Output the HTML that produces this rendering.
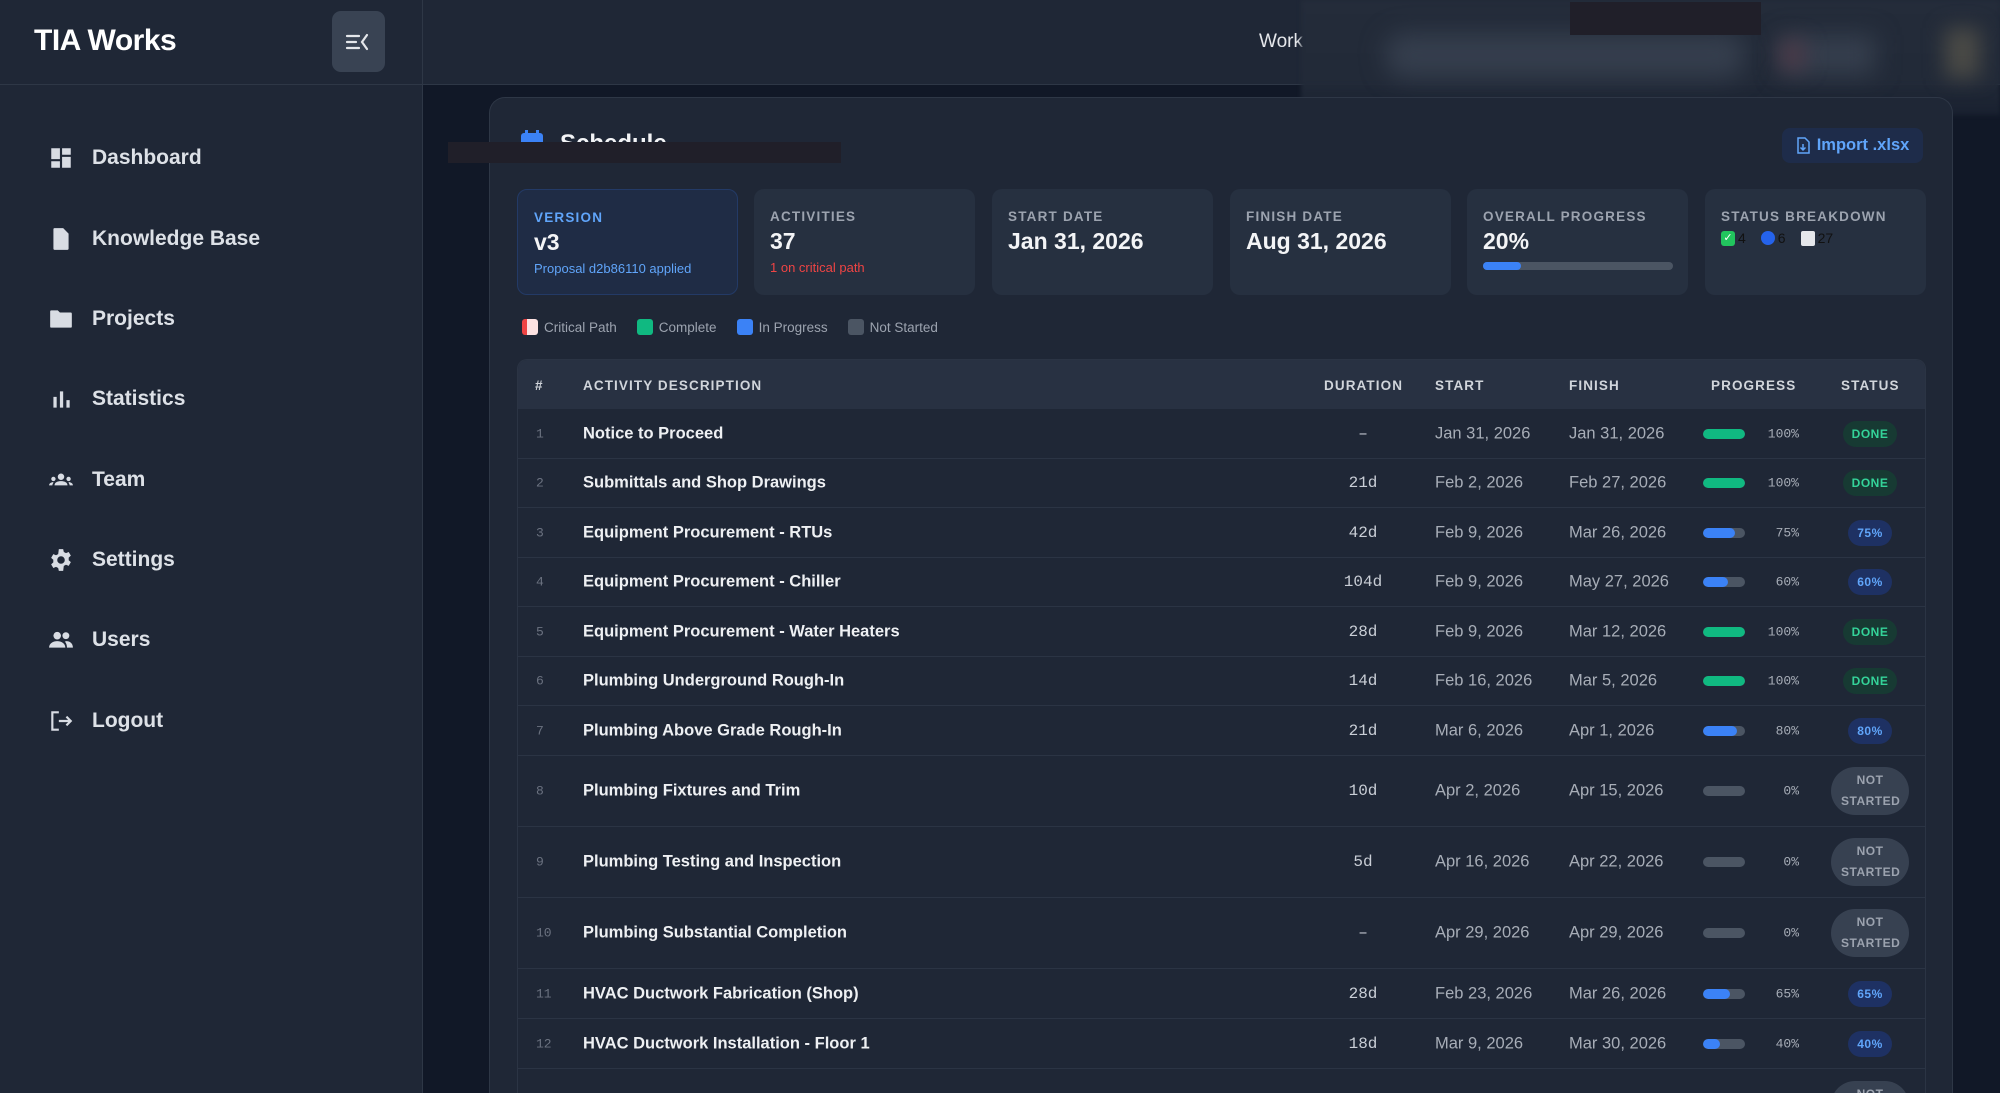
<!DOCTYPE html>
<html style="width:2000px;height:1093px;overflow:hidden"><head><meta charset="utf-8">
<style>
*{box-sizing:border-box;margin:0;padding:0}
body{width:2000px;height:1093px;overflow:hidden;background:#111827;font-family:"Liberation Sans",sans-serif;position:relative;color:#e5e7eb}
.abs{position:absolute}
#side{left:0;top:0;width:423px;height:1093px;background:#1f2736;border-right:1px solid #2e3746}
#top{left:423px;top:0;width:1577px;height:85px;background:#1f2736;border-bottom:1px solid #2e3746}
.nav{position:absolute;left:48px;height:30px;display:flex;align-items:center;font-size:21px;color:#dde1e7;font-weight:700}
.nav svg{width:26px;height:26px;margin-right:18px;fill:#d8dce3}
#card{left:489px;top:97px;width:1464px;height:996px;background:#1f2736;border:1px solid #2e3746;border-bottom:none;border-radius:16px 16px 0 0}
.stat{position:absolute;top:189px;width:221px;height:106px;background:#263040;border-radius:10px;padding:0 16px}
.stat .l{position:absolute;top:20px;left:16px;font-size:13.5px;letter-spacing:1.2px;color:#9ca3af;font-weight:700}
.stat .v{position:absolute;top:39px;left:16px;font-size:23px;font-weight:700;color:#f3f4f6}
.stat .s{position:absolute;top:71px;left:16px;font-size:13px}
#tbl{left:517px;top:359px;width:1409px;height:734px;background:#1d2534;border:1px solid #2b3444;border-bottom:none;border-radius:10px 10px 0 0;overflow:hidden}
.th{position:absolute;top:0;left:0;right:0;height:49px;background:#283142}
.th div{position:absolute;top:18px;font-size:13.5px;font-weight:700;letter-spacing:1.1px;color:#d1d5db}
.row{position:absolute;left:0;right:0;border-bottom:1px solid #2b3444;background:#1f2736}
.row div{position:absolute;top:50%;transform:translateY(-50%)}
.n{left:18px;font-family:"Liberation Mono",monospace;font-size:13px;color:#6b7280}
.d{left:65px;font-size:16.5px;font-weight:700;color:#eef0f3}
.du{left:820px;width:50px;text-align:center;font-family:"Liberation Mono",monospace;font-size:16px;color:#c9ced6}
.st{left:917px;font-size:16.5px;color:#a7adb7}
.fi{left:1051px;font-size:16.5px;color:#a7adb7}
.bar{left:1185px;width:42px;height:10px;border-radius:5px;background:#4b5563;overflow:hidden}
.bar i{display:block;height:100%;border-radius:5px}
.pc{left:1236px;width:45px;text-align:right;font-family:"Liberation Mono",monospace;font-size:13px;color:#a7adb7}
.bd{left:1312px;width:80px;text-align:center}
.bd span{display:inline-block;font-size:12px;font-weight:700;letter-spacing:.5px;border-radius:14px;padding:6px 9px}
.done{background:#173a33;color:#34d399}
.prog{background:#1e3163;color:#60a5fa}
.ns{background:#374151;color:#9ca3af;line-height:21px;padding:3px 10px!important;border-radius:24px!important;width:78px}
</style></head><body>
<div id="side" class="abs">
 <div class="abs" style="left:34px;top:24px;font-size:30px;font-weight:700;color:#fff;letter-spacing:-.5px">TIA Works</div>
 <div class="abs" style="left:332px;top:11px;width:53px;height:61px;background:#394353;border-radius:9px">
  <svg width="53" height="61" viewBox="0 0 53 61"><path d="M15 25h12M15 31h9M15 37h12M35 24l-5 7 5 7" stroke="#e5e7eb" stroke-width="2.2" fill="none" stroke-linecap="round"/></svg>
 </div>
 <div style="position:absolute;left:0;top:84px;width:423px;border-top:1px solid #2e3746"></div>
 <div class="nav" style="top:143px"><svg viewBox="0 0 24 24"><path d="M3 3h8v10H3zM13 3h8v6h-8zM13 11h8v10h-8zM3 15h8v6H3z"/></svg>Dashboard</div>
 <div class="nav" style="top:224px"><svg viewBox="0 0 24 24"><path d="M6 2h8l5 5v14a1 1 0 0 1-1 1H6a1 1 0 0 1-1-1V3a1 1 0 0 1 1-1zm3 11h7v1.5H9zm0 3h7v1.5H9z"/></svg>Knowledge Base</div>
 <div class="nav" style="top:304px"><svg viewBox="0 0 24 24"><path d="M2 5a1 1 0 0 1 1-1h6l2 2h10a1 1 0 0 1 1 1v12a1 1 0 0 1-1 1H3a1 1 0 0 1-1-1z"/></svg>Projects</div>
 <div class="nav" style="top:384px"><svg viewBox="0 0 24 24"><path d="M5 10h3v10H5zM11 5h3v15h-3zM17 13h3v7h-3z"/></svg>Statistics</div>
 <div class="nav" style="top:465px"><svg viewBox="0 0 24 24"><circle cx="12" cy="9" r="3"/><path d="M6 17c0-3 3-4 6-4s6 1 6 4z"/><circle cx="5" cy="11" r="2"/><circle cx="19" cy="11" r="2"/><path d="M1 17c0-2 2-3 4-3 0 1-1 2-1 3zM23 17c0-2-2-3-4-3 0 1 1 2 1 3z"/></svg>Team</div>
 <div class="nav" style="top:545px"><svg viewBox="0 0 24 24"><path d="M10 2h4l.6 2.6 2 1 2.5-1 2 3.4-2 1.8v2.4l2 1.8-2 3.4-2.5-1-2 1L14 22h-4l-.6-2.6-2-1-2.5 1-2-3.4 2-1.8v-2.4l-2-1.8 2-3.4 2.5 1 2-1zM12 8.5a3.5 3.5 0 1 0 0 7 3.5 3.5 0 0 0 0-7z"/></svg>Settings</div>
 <div class="nav" style="top:625px"><svg viewBox="0 0 24 24"><circle cx="8.5" cy="8" r="3.5"/><circle cx="16.5" cy="8" r="3.2"/><path d="M1 19c0-4 4-6 7.5-6s7.5 2 7.5 6zM17 13c3 0 6 2 6 6h-5.5c0-2-.5-4-2-5.5z"/></svg>Users</div>
 <div class="nav" style="top:706px"><svg viewBox="0 0 24 24" style="fill:none;stroke:#d8dce3;stroke-width:2"><path d="M10 4H4v16h6M10 12h11M17 8l4 4-4 4"/></svg>Logout</div>
</div>
<div id="top" class="abs">
 <div class="abs" style="left:836px;top:31px;font-size:19px;color:#e5e7eb">Work</div>
</div>
<div class="abs" style="left:1301px;top:0;width:699px;height:115px;background:linear-gradient(180deg,#242c3a 0%,#222a38 70%,rgba(31,39,54,0.6) 100%);filter:blur(2px)"></div>
<div class="abs" style="left:1385px;top:33px;width:360px;height:45px;background:#353e4d;filter:blur(12px);border-radius:20px"></div>
<div class="abs" style="left:1780px;top:35px;width:95px;height:40px;background:#353e4d;filter:blur(12px)"></div>
<div class="abs" style="left:1780px;top:40px;width:25px;height:30px;background:#4a3a48;filter:blur(10px)"></div>
<div class="abs" style="left:1945px;top:28px;width:35px;height:50px;background:#4a4a46;filter:blur(10px)"></div>
<div class="abs" style="left:1570px;top:2px;width:191px;height:33px;background:#201f29"></div>

<div id="card" class="abs"></div>
<svg class="abs" style="left:520px;top:130px" width="24" height="22" viewBox="0 0 24 22"><rect x="1" y="3" width="22" height="19" rx="3" fill="#3b82f6"/><rect x="5" y="0" width="3" height="6" fill="#3b82f6"/><rect x="16" y="0" width="3" height="6" fill="#3b82f6"/></svg>
<div class="abs" style="left:560px;top:130px;font-size:24px;font-weight:700;color:#f3f4f6">Schedule</div>
<div class="abs" style="left:448px;top:142px;width:393px;height:21px;background:#201f29"></div>
<div class="abs" style="left:1782px;top:128px;width:141px;height:35px;background:#1e2c4a;border-radius:8px;color:#60a5fa;font-size:16.5px;font-weight:600;display:flex;align-items:center;justify-content:center;gap:7px">
 <svg width="14" height="17" viewBox="0 0 14 17"><path d="M2 1h7l4 4v11H2zM7 7v6M4.5 10.5L7 13l2.5-2.5" stroke="#60a5fa" stroke-width="1.5" fill="none"/></svg>Import .xlsx</div>

<div class="stat" style="left:517px;background:#1f2c45;border:1px solid #233a66"><div class="l" style="color:#60a5fa">VERSION</div><div class="v">v3</div><div class="s" style="color:#60a5fa">Proposal d2b86110 applied</div></div>
<div class="stat" style="left:754px"><div class="l">ACTIVITIES</div><div class="v">37</div><div class="s" style="color:#ef4444">1 on critical path</div></div>
<div class="stat" style="left:992px"><div class="l">START DATE</div><div class="v">Jan 31, 2026</div></div>
<div class="stat" style="left:1230px"><div class="l">FINISH DATE</div><div class="v">Aug 31, 2026</div></div>
<div class="stat" style="left:1467px"><div class="l">OVERALL PROGRESS</div><div class="v">20%</div><div class="abs" style="left:16px;top:73px;width:190px;height:8px;border-radius:4px;background:#4b5563"><div style="width:38px;height:8px;border-radius:4px;background:#3b82f6"></div></div></div>
<div class="stat" style="left:1705px"><div class="l">STATUS BREAKDOWN</div>
 <div class="abs" style="top:41px;left:16px;font-size:14px;color:#111;display:flex;align-items:center;gap:3px">
  <span style="display:inline-block;width:14px;height:15px;background:#22c55e;border-radius:3px;color:#fff;font-size:11px;text-align:center;line-height:15px">✓</span>4
  <span style="display:inline-block;width:14px;height:14px;background:#2563eb;border-radius:50%;margin-left:12px"></span>6
  <span style="display:inline-block;width:14px;height:15px;background:#e5e7eb;border-radius:2px;margin-left:12px"></span>27</div></div>

<div class="abs" style="left:522px;top:319px;display:flex;align-items:center;font-size:13.5px;color:#9ca3af">
 <span style="width:16px;height:16px;border-radius:3px;background:linear-gradient(90deg,#ef4444 30%,#fde2e2 30%);margin-right:6px"></span>Critical Path
 <span style="width:16px;height:16px;border-radius:3px;background:#10b981;margin:0 6px 0 20px"></span>Complete
 <span style="width:16px;height:16px;border-radius:3px;background:#3b82f6;margin:0 6px 0 20px"></span>In Progress
 <span style="width:16px;height:16px;border-radius:3px;background:#4b5563;margin:0 6px 0 20px"></span>Not Started
</div>

<div id="tbl" class="abs">
 <div class="th"><div style="left:17px">#</div><div style="left:65px">ACTIVITY DESCRIPTION</div><div style="left:806px">DURATION</div><div style="left:917px">START</div><div style="left:1051px">FINISH</div><div style="left:1193px">PROGRESS</div><div style="left:1323px">STATUS</div></div>
 <div class="row" style="top:49px;height:50px"><div class="n">1</div><div class="d">Notice to Proceed</div><div class="du">–</div><div class="st">Jan 31, 2026</div><div class="fi">Jan 31, 2026</div><div class="bar"><i style="width:100%;background:#10b981"></i></div><div class="pc">100%</div><div class="bd"><span class="done">DONE</span></div></div>
 <div class="row" style="top:99px;height:49px"><div class="n">2</div><div class="d">Submittals and Shop Drawings</div><div class="du">21d</div><div class="st">Feb 2, 2026</div><div class="fi">Feb 27, 2026</div><div class="bar"><i style="width:100%;background:#10b981"></i></div><div class="pc">100%</div><div class="bd"><span class="done">DONE</span></div></div>
 <div class="row" style="top:148px;height:50px"><div class="n">3</div><div class="d">Equipment Procurement - RTUs</div><div class="du">42d</div><div class="st">Feb 9, 2026</div><div class="fi">Mar 26, 2026</div><div class="bar"><i style="width:75%;background:#3b82f6"></i></div><div class="pc">75%</div><div class="bd"><span class="prog">75%</span></div></div>
 <div class="row" style="top:198px;height:49px"><div class="n">4</div><div class="d">Equipment Procurement - Chiller</div><div class="du">104d</div><div class="st">Feb 9, 2026</div><div class="fi">May 27, 2026</div><div class="bar"><i style="width:60%;background:#3b82f6"></i></div><div class="pc">60%</div><div class="bd"><span class="prog">60%</span></div></div>
 <div class="row" style="top:247px;height:50px"><div class="n">5</div><div class="d">Equipment Procurement - Water Heaters</div><div class="du">28d</div><div class="st">Feb 9, 2026</div><div class="fi">Mar 12, 2026</div><div class="bar"><i style="width:100%;background:#10b981"></i></div><div class="pc">100%</div><div class="bd"><span class="done">DONE</span></div></div>
 <div class="row" style="top:297px;height:49px"><div class="n">6</div><div class="d">Plumbing Underground Rough-In</div><div class="du">14d</div><div class="st">Feb 16, 2026</div><div class="fi">Mar 5, 2026</div><div class="bar"><i style="width:100%;background:#10b981"></i></div><div class="pc">100%</div><div class="bd"><span class="done">DONE</span></div></div>
 <div class="row" style="top:346px;height:50px"><div class="n">7</div><div class="d">Plumbing Above Grade Rough-In</div><div class="du">21d</div><div class="st">Mar 6, 2026</div><div class="fi">Apr 1, 2026</div><div class="bar"><i style="width:80%;background:#3b82f6"></i></div><div class="pc">80%</div><div class="bd"><span class="prog">80%</span></div></div>
 <div class="row" style="top:396px;height:71px"><div class="n">8</div><div class="d">Plumbing Fixtures and Trim</div><div class="du">10d</div><div class="st">Apr 2, 2026</div><div class="fi">Apr 15, 2026</div><div class="bar"></div><div class="pc">0%</div><div class="bd"><span class="ns">NOT STARTED</span></div></div>
 <div class="row" style="top:467px;height:71px"><div class="n">9</div><div class="d">Plumbing Testing and Inspection</div><div class="du">5d</div><div class="st">Apr 16, 2026</div><div class="fi">Apr 22, 2026</div><div class="bar"></div><div class="pc">0%</div><div class="bd"><span class="ns">NOT STARTED</span></div></div>
 <div class="row" style="top:538px;height:71px"><div class="n">10</div><div class="d">Plumbing Substantial Completion</div><div class="du">–</div><div class="st">Apr 29, 2026</div><div class="fi">Apr 29, 2026</div><div class="bar"></div><div class="pc">0%</div><div class="bd"><span class="ns">NOT STARTED</span></div></div>
 <div class="row" style="top:609px;height:50px"><div class="n">11</div><div class="d">HVAC Ductwork Fabrication (Shop)</div><div class="du">28d</div><div class="st">Feb 23, 2026</div><div class="fi">Mar 26, 2026</div><div class="bar"><i style="width:65%;background:#3b82f6"></i></div><div class="pc">65%</div><div class="bd"><span class="prog">65%</span></div></div>
 <div class="row" style="top:659px;height:50px"><div class="n">12</div><div class="d">HVAC Ductwork Installation - Floor 1</div><div class="du">18d</div><div class="st">Mar 9, 2026</div><div class="fi">Mar 30, 2026</div><div class="bar"><i style="width:40%;background:#3b82f6"></i></div><div class="pc">40%</div><div class="bd"><span class="prog">40%</span></div></div>
 <div class="row" style="top:709px;height:71px;border:none"><div class="bd" style="top:36px"><span class="ns">NOT STARTED</span></div></div>
</div>
</body></html>
